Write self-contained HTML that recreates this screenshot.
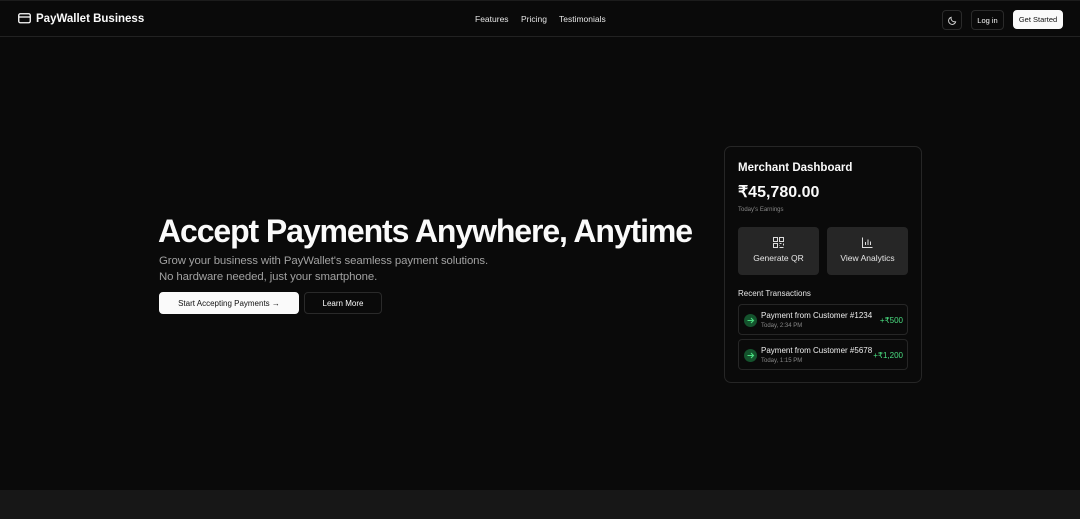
<!DOCTYPE html>
<html><head><meta charset="utf-8"><style>
*{box-sizing:border-box;margin:0;padding:0}
body{width:1080px;height:519px;background:#0a0a0a;color:#fafafa;font-family:"Liberation Sans",sans-serif;position:relative;overflow:hidden}
.abs{position:absolute}
.hdr{left:0;top:0;width:1080px;height:37px;border-bottom:1px solid #222;border-top:1px solid #1c1c1c}
.nav a{position:absolute;top:13px;font-size:8.5px;color:#e5e5e5}
.btn{position:absolute;border:1px solid #2a2a2a;border-radius:4px;font-size:7.5px;display:flex;align-items:center;justify-content:center}
h1{position:absolute;left:158px;top:213px;font-size:32px;font-weight:bold;letter-spacing:-1.1px;white-space:nowrap}
.sub{left:159px;top:253px;font-size:11.4px;color:#a1a1a1;line-height:16px;letter-spacing:-0.1px}
.card{left:724px;top:146px;width:198px;height:237px;border:1px solid #262626;border-radius:7px}
.tile{position:absolute;top:80px;width:81px;height:48px;background:#262626;border-radius:4px;font-size:8.5px;text-align:center;color:#e5e5e5}
.tx{position:absolute;left:13px;width:170px;height:31px;border:1px solid #262626;border-radius:4px}
.tx .ic{position:absolute;left:5px;top:9px;width:13px;height:13px;border-radius:50%;background:#14532d}
.tx .t{position:absolute;left:22px;top:6px;font-size:8px;color:#eee}
.tx .s{position:absolute;left:22px;top:18px;font-size:6px;color:#888}
.tx .a{position:absolute;right:4px;top:11px;font-size:8px;color:#4ade80}
</style></head><body>
<div class="abs hdr">
 <svg class="abs" style="left:18px;top:12px" width="13" height="11" viewBox="0 0 13 11"><rect x="0.75" y="0.75" width="11.5" height="9" rx="1.5" fill="none" stroke="#fff" stroke-width="1.3"/><line x1="1" y1="4" x2="12" y2="4" stroke="#fff" stroke-width="1.3"/></svg>
 <div class="abs" style="left:36px;top:12px;font-size:11.5px;font-weight:bold">PayWallet Business</div>
 <div class="nav"><a style="left:475px">Features</a><a style="left:521px">Pricing</a><a style="left:559px">Testimonials</a></div>
 <div class="btn" style="left:942px;top:9px;width:20px;height:20px"><svg width="9" height="9" viewBox="0 0 10 10"><path d="M7.5 6.5A4 4 0 0 1 3.5 1.5 4 4 0 1 0 8.5 6.5z" fill="none" stroke="#ddd" stroke-width="1"/></svg></div>
 <div class="btn" style="left:971px;top:9px;width:33px;height:20px">Log in</div>
 <div class="btn" style="left:1013px;top:9px;width:50px;height:19px;background:#fafafa;color:#111;border-color:#fafafa">Get Started</div>
</div>
<h1>Accept Payments Anywhere, Anytime</h1>
<div class="abs sub">Grow your business with PayWallet's seamless payment solutions.<br>No hardware needed, just your smartphone.</div>
<div class="btn" style="left:159px;top:292px;width:140px;height:22px;background:#fafafa;color:#111;border-color:#fafafa;font-size:8px">Start Accepting Payments →</div>
<div class="btn" style="left:304px;top:292px;width:78px;height:22px;font-size:8px">Learn More</div>
<div class="abs card">
 <div class="abs" style="left:13px;top:15px;font-size:11.5px;font-weight:bold">Merchant Dashboard</div>
 <div class="abs" style="left:13px;top:35px;font-size:16px;font-weight:bold">₹45,780.00</div>
 <div class="abs" style="left:13px;top:60px;font-size:6px;color:#888">Today's Earnings</div>
 <div class="tile" style="left:13px"><svg style="margin-top:10px" width="11" height="11" viewBox="0 0 11 11" fill="none" stroke="#ddd" stroke-width="1"><rect x="0.5" y="0.5" width="4" height="4"/><rect x="6.5" y="0.5" width="4" height="4"/><rect x="0.5" y="6.5" width="4" height="4"/><path d="M6.5 6.5h2M10.5 6.5v2M6.5 10.5h4M6.5 8.5v0.5"/></svg><div style="margin-top:3px">Generate QR</div></div>
 <div class="tile" style="left:102px"><svg style="margin-top:10px" width="11" height="11" viewBox="0 0 11 11" fill="none" stroke="#ddd" stroke-width="1"><path d="M0.5 0.5v10h10M3.5 8V5M6 8V2.5M8.5 8V4.5"/></svg><div style="margin-top:3px">View Analytics</div></div>
 <div class="abs" style="left:13px;top:142px;font-size:8px;color:#e5e5e5">Recent Transactions</div>
 <div class="tx" style="top:157px"><div class="ic"><svg width="13" height="13" viewBox="0 0 13 13" fill="none" stroke="#4ade80" stroke-width="1.1"><path d="M3.5 6.5h6M7 4l2.5 2.5L7 9"/></svg></div><div class="t">Payment from Customer #1234</div><div class="s">Today, 2:34 PM</div><div class="a">+₹500</div></div>
 <div class="tx" style="top:192px"><div class="ic"><svg width="13" height="13" viewBox="0 0 13 13" fill="none" stroke="#4ade80" stroke-width="1.1"><path d="M3.5 6.5h6M7 4l2.5 2.5L7 9"/></svg></div><div class="t">Payment from Customer #5678</div><div class="s">Today, 1:15 PM</div><div class="a">+₹1,200</div></div>
</div>
<div class="abs" style="left:0;top:490px;width:1080px;height:29px;background:#171717"></div>
</body></html>
